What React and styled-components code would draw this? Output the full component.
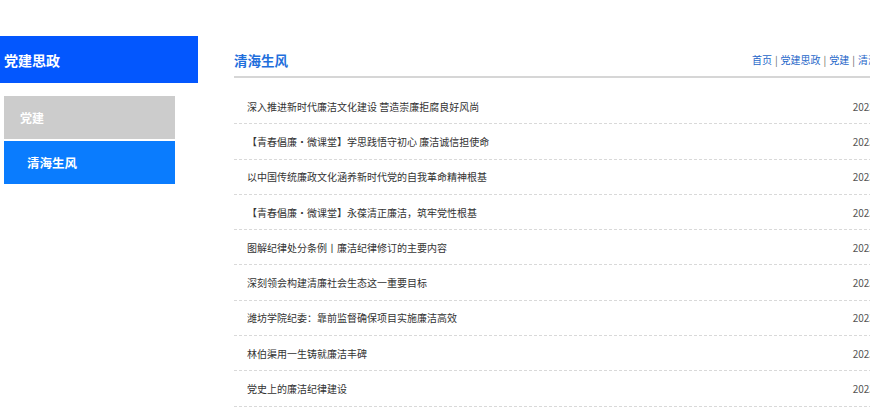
import React from "react";
import styled, { createGlobalStyle } from "styled-components";

const GlobalStyle = createGlobalStyle`
  html, body {
    margin: 0;
    padding: 0;
    background: #fff;
    overflow: hidden;
    font-family: "Noto Sans CJK SC", "Liberation Sans", sans-serif;
  }
`;

const Page = styled.div`
  display: flex;
  align-items: flex-start;
  width: 960px;
`;

const Sidebar = styled.aside`
  width: 198px;
  flex: none;
  margin-top: 36px;
`;

const SideHead = styled.div`
  height: 47px;
  display: flex;
  align-items: center;
  padding-left: 4px;
  background-color: #0357fe;
  color: #fff;
  font-size: 14px;
  font-weight: bold;
`;

const SubList = styled.ul`
  list-style: none;
  margin: 13px 0 0 4px;
  padding: 0;
  width: 171px;
`;

const SubItem = styled.li`
  height: 43px;
  display: flex;
  align-items: center;
  padding-left: ${({ active }) => (active ? "23px" : "16px")};
  margin-bottom: 2px;
  background-color: ${({ active }) => (active ? "#0a7cfe" : "#cccccc")};
  color: #fff;
  font-size: ${({ active }) => (active ? "12.5px" : "12px")};
  font-weight: bold;
`;

const Main = styled.main`
  width: 683px;
  flex: none;
  margin-left: 36px;
  margin-top: 50px;
`;

const TitleBar = styled.div`
  display: flex;
  justify-content: space-between;
  align-items: center;
  height: 20px;
  padding-bottom: 6px;
  border-bottom: 2px solid #d6d6d6;
`;

const Title = styled.h2`
  margin: 0;
  color: #1f6fdc;
  font-size: 13.5px;
  font-weight: bold;
  line-height: 20px;
`;

const Crumbs = styled.div`
  color: #2767c9;
  font-size: 10px;
  line-height: 20px;
  white-space: nowrap;
  padding-right: 19px;
`;

const Sep = styled.span`
  margin: 0 3px;
  color: #666;
`;

const List = styled.ul`
  list-style: none;
  margin: 0;
  padding: 11px 0 0;
`;

const Row = styled.li`
  display: flex;
  justify-content: space-between;
  align-items: center;
  height: 34.3px;
  border-bottom: 1px dashed #d9d9d9;
  padding: 0 13px;
  font-size: 10px;
`;

const RowTitle = styled.span`
  color: #333;
`;

const RowDate = styled.span`
  color: #555;
`;

const crumbs = ["首页", "党建思政", "党建", "清海生风"];

const items = [
  ["深入推进新时代廉洁文化建设 营造崇廉拒腐良好风尚", "2023-06-12"],
  ["【青春倡廉•微课堂】学思践悟守初心 廉洁诚信担使命", "2023-06-05"],
  ["以中国传统廉政文化涵养新时代党的自我革命精神根基", "2023-05-29"],
  ["【青春倡廉•微课堂】永葆清正廉洁，筑牢党性根基", "2023-05-22"],
  ["图解纪律处分条例丨廉洁纪律修订的主要内容", "2023-05-15"],
  ["深刻领会构建清廉社会生态这一重要目标", "2023-05-08"],
  ["潍坊学院纪委：靠前监督确保项目实施廉洁高效", "2023-04-28"],
  ["林伯渠用一生铸就廉洁丰碑", "2023-04-21"],
  ["党史上的廉洁纪律建设", "2023-04-14"],
];

export default function App() {
  return (
    <>
      <GlobalStyle />
      <Page>
        <Sidebar>
          <SideHead>党建思政</SideHead>
          <SubList>
            <SubItem>党建</SubItem>
            <SubItem active>清海生风</SubItem>
          </SubList>
        </Sidebar>
        <Main>
          <TitleBar>
            <Title>清海生风</Title>
            <Crumbs>
              {crumbs.map((c, i) => (
                <React.Fragment key={c}>
                  {i > 0 && <Sep>|</Sep>}
                  {c}
                </React.Fragment>
              ))}
            </Crumbs>
          </TitleBar>
          <List>
            {items.map(([t, d]) => (
              <Row key={t}>
                <RowTitle>{t}</RowTitle>
                <RowDate>{d}</RowDate>
              </Row>
            ))}
          </List>
        </Main>
      </Page>
    </>
  );
}
